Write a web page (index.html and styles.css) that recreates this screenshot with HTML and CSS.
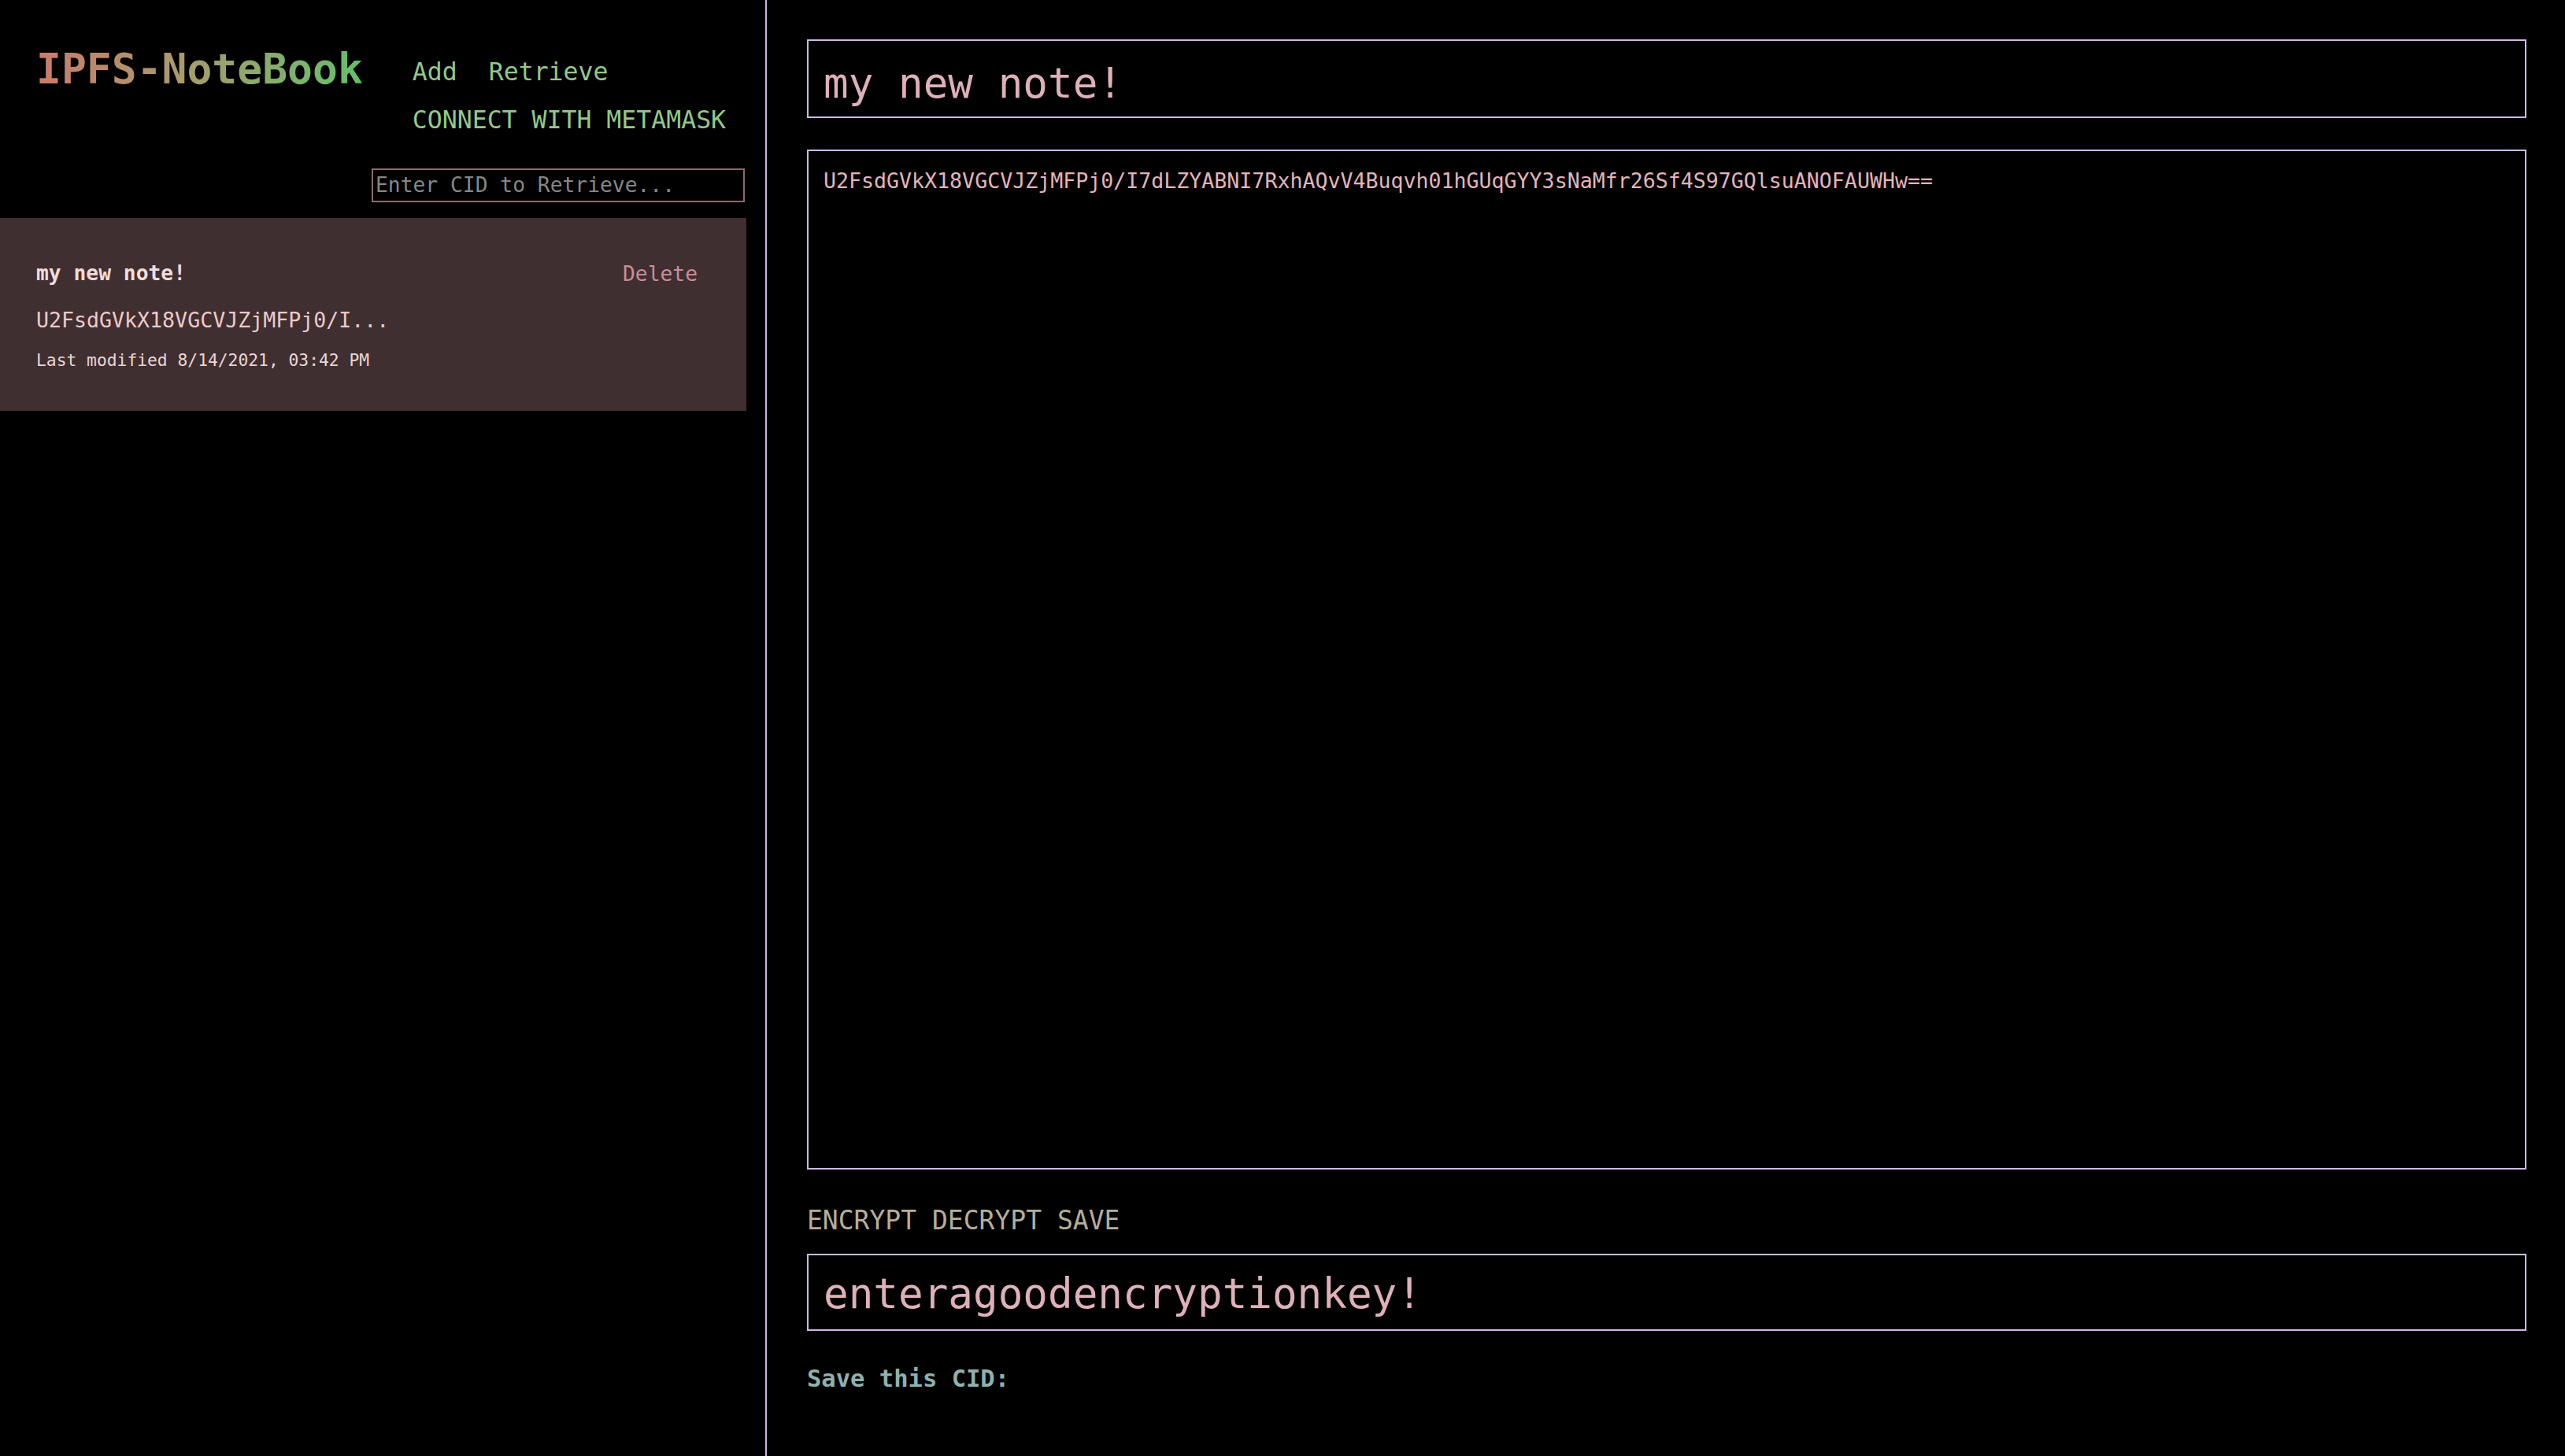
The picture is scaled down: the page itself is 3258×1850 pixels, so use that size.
FILE: index.html
```html
<!DOCTYPE html>
<html lang="en">
<head>
<meta charset="utf-8">
<title>IPFS-NoteBook</title>
<link rel="stylesheet" href="styles.css">
</head>
<body>
<div class="app">
  <aside class="sidebar">
    <header class="header">
      <h1 class="logo">IPFS-NoteBook</h1>
      <nav class="nav">
        <div class="nav-row"><a class="nav-link add">Add</a><a class="nav-link">Retrieve</a></div>
        <div class="nav-row"><a class="nav-link">CONNECT WITH METAMASK</a></div>
      </nav>
    </header>
    <div class="cid-row">
      <input class="cid-input" type="text" placeholder="Enter CID to Retrieve...">
    </div>
    <div class="note-card">
      <div class="note-top">
        <strong class="note-title">my new note!</strong>
        <span class="note-delete">Delete</span>
      </div>
      <p class="note-preview">U2FsdGVkX18VGCVJZjMFPj0/I...</p>
      <small class="note-meta">Last modified 8/14/2021, 03:42 PM</small>
    </div>
  </aside>
  <main class="main">
    <input class="title-input" type="text" value="my new note!">
    <textarea class="body-input">U2FsdGVkX18VGCVJZjMFPj0/I7dLZYABNI7RxhAQvV4Buqvh01hGUqGYY3sNaMfr26Sf4S97GQlsuANOFAUWHw==</textarea>
    <div class="actions"><button class="action">ENCRYPT</button> <button class="action">DECRYPT</button> <button class="action">SAVE</button></div>
    <input class="key-input" type="text" value="enteragoodencryptionkey!">
    <p class="cid-label">Save this CID:</p>
  </main>
</div>
</body>
</html>
```

FILE: styles.css
```css
html, body {
  margin: 0;
  padding: 0;
  background: #000;
}

body {
  font-family: "DejaVu Sans Mono", "Liberation Mono", monospace;
  color: #e8d0d0;
}

.app {
  display: flex;
  min-height: 100vh;
}

.sidebar {
  width: 972px;
  flex: none;
  border-right: 2px solid #c6b4de;
  display: flex;
  flex-direction: column;
}

.header {
  display: flex;
  align-items: flex-start;
  padding: 61px 0 0 46px;
}

.logo {
  margin: 0;
  font-size: 53px;
  line-height: 53px;
  font-weight: bold;
  background: linear-gradient(90deg, #c97c6b 0%, #a89b6c 45%, #64bf6c 100%);
  -webkit-background-clip: text;
  background-clip: text;
  color: transparent;
}

.nav {
  margin-left: 63px;
  margin-top: -0.4px;
  font-size: 31.5px;
  line-height: 61px;
}

.nav-row {
  display: flex;
}

.nav-link {
  color: #94c887;
  cursor: pointer;
}

.add {
  margin-right: 40px;
}

.cid-row {
  display: flex;
  justify-content: flex-end;
  padding-right: 26px;
  margin-top: 31px;
}

.cid-input {
  box-sizing: border-box;
  width: 474px;
  height: 43px;
  background: #000;
  border: 2px solid #8b6b6e;
  padding: 0 3px;
  font-family: "DejaVu Sans Mono", monospace;
  font-size: 26.3px;
  color: #ddd;
  outline: none;
}

.cid-input::placeholder {
  color: #878787;
}

.note-card {
  width: 948px;
  box-sizing: border-box;
  margin-top: 20px;
  background: #402f30;
  padding: 57px 62px 54px 46px;
  display: flex;
  flex-direction: column;
}

.note-top {
  display: flex;
  justify-content: space-between;
  align-items: baseline;
}

.note-title {
  font-size: 26.3px;
  line-height: 26px;
  font-weight: bold;
  color: #f1dcdc;
}

.note-delete {
  font-size: 26.3px;
  line-height: 26px;
  color: #cc8c9a;
  position: relative;
  top: 1px;
}

.note-preview {
  margin: 34px 0 0;
  font-size: 26.6px;
  line-height: 26px;
  color: #ecc9c9;
}

.note-meta {
  margin-top: 27px;
  font-size: 21.3px;
  line-height: 21px;
  color: #ead6d6;
}

.main {
  flex: 1;
  min-width: 0;
  padding: 50px 49px 0 51px;
  display: flex;
  flex-direction: column;
}

.title-input,
.key-input {
  box-sizing: border-box;
  width: 100%;
  background: #000;
  border: 2px solid #cdb9e6;
  font-family: "DejaVu Sans Mono", monospace;
  font-size: 52.6px;
  color: #deb0b8;
  outline: none;
  padding: 10px 19px 0;
}

.title-input {
  height: 100px;
}

.body-input {
  box-sizing: border-box;
  width: 100%;
  height: 1296px;
  margin-top: 40px;
  background: #000;
  border: 2px solid #cdb9e6;
  padding: 22px 19px;
  font-family: "DejaVu Sans Mono", monospace;
  font-size: 26.6px;
  line-height: 1.2;
  color: #e3b4bc;
  resize: none;
  outline: none;
}

.actions {
  margin-top: 48px;
  font-size: 33px;
  line-height: 33px;
  color: #b6ae98;
}

.action {
  background: none;
  border: none;
  padding: 0;
  margin: 0;
  font-family: "DejaVu Sans Mono", monospace;
  font-size: 33px;
  line-height: 33px;
  color: #b6ae98;
  cursor: pointer;
}

.key-input {
  height: 98px;
  margin-top: 26px;
  padding-top: 2px;
}

.cid-label {
  margin: 46px 0 0;
  font-size: 30.5px;
  line-height: 30px;
  font-weight: bold;
  color: #8fb1ae;
}
```
